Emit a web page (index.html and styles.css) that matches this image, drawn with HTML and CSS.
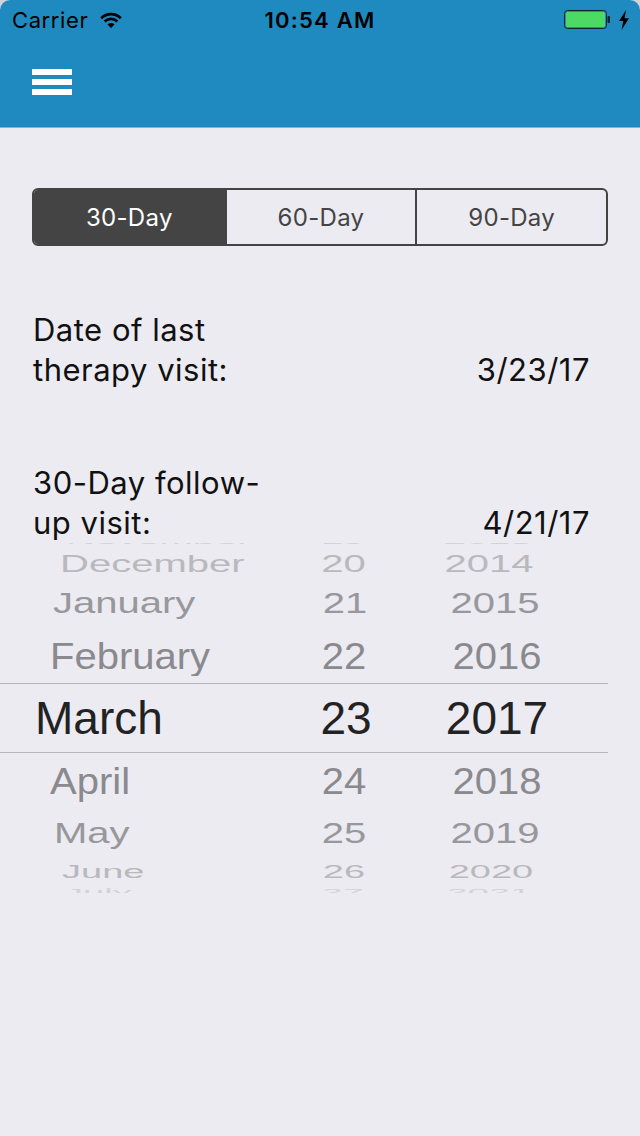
FILE: index.html
```html
<!DOCTYPE html>
<html lang="en">

    <head>
        <meta charset="UTF-8">
        <meta name="viewport" content="width=device-width, initial-scale=1.0">
        <title>Follow-up visits</title>
        <link rel="stylesheet" href="styles.css">
    </head>

    <body>
        <div class="app">
            <header>
                <div class="status-bar">
                    <div class="carrier">
                        Carrier
                        <svg class="wifi" width="24" height="17" viewBox="0 0 21 16">
                            <path d="M10.5 15 L7.2 11.7 A4.7 4.7 0 0 1 13.8 11.7 Z" fill="#000" />
                            <path d="M4.5 9 A8.5 8.5 0 0 1 16.5 9" fill="none" stroke="#000" stroke-width="2.6" />
                            <path d="M1.3 5.8 A13 13 0 0 1 19.7 5.8" fill="none" stroke="#000" stroke-width="2.6" />
                        </svg>
                    </div>
                    <div class="clock">10:54 AM</div>
                    <div class="battery">
                        <svg width="66" height="20" viewBox="0 0 66 20">
                            <rect x="0.5" y="0.5" width="42" height="18" rx="3" fill="none" stroke="#10242f" />
                            <rect x="2" y="2" width="39" height="15" rx="1.5" fill="#4cd964" />
                            <rect x="43.5" y="6" width="2.5" height="7" rx="1" fill="#10242f" />
                            <path d="M62 0 L55 11 L59.3 11 L57.5 20 L65 8.3 L60.6 8.3 Z" fill="#000" />
                        </svg>
                    </div>
                </div>
                <div class="nav-bar">
                    <button class="menu-btn" aria-label="Menu">
                        <span></span><span></span><span></span>
                    </button>
                </div>
            </header>

            <main>
                <div class="segmented">
                    <div class="segment active">30-Day</div>
                    <div class="segment">60-Day</div>
                    <div class="segment">90-Day</div>
                </div>

                <div class="date-row first">
                    <div class="label">Date of last<br>therapy visit:</div>
                    <div class="value">3/23/17</div>
                </div>

                <div class="date-row second">
                    <div class="label">30-Day follow-<br>up visit:</div>
                    <div class="value">4/21/17</div>
                </div>

                <!-- date wheel -->
                <div class="picker">
                    <div class="wheel-row r-nov"><span class="m">November</span><span class="d">19</span><span class="y">2013</span></div>
                    <div class="wheel-row r-dec"><span class="m">December</span><span class="d">20</span><span class="y">2014</span></div>
                    <div class="wheel-row r-jan"><span class="m">January</span><span class="d">21</span><span class="y">2015</span></div>
                    <div class="wheel-row r-feb"><span class="m">February</span><span class="d">22</span><span class="y">2016</span></div>
                    <div class="wheel-row r-mar"><span class="m">March</span><span class="d">23</span><span class="y">2017</span></div>
                    <div class="wheel-row r-apr"><span class="m">April</span><span class="d">24</span><span class="y">2018</span></div>
                    <div class="wheel-row r-may"><span class="m">May</span><span class="d">25</span><span class="y">2019</span></div>
                    <div class="wheel-row r-jun"><span class="m">June</span><span class="d">26</span><span class="y">2020</span></div>
                    <div class="wheel-row r-jul"><span class="m">July</span><span class="d">27</span><span class="y">2021</span></div>
                </div>
            </main>
        </div>
    </body>

</html>
```

FILE: styles.css
```css
:root {
    --bar-color: #1f8ac0;
    --bg-light: #ecebf1;
    --segment-color: #444444;
    --text-color: #111111;
    --wheel-line: #b7b7bb;
}

*,
*::before,
*::after {
    box-sizing: border-box;
}

body {
    margin: 0;
    background: #d2d2d6;
    font-family: Inter, "Liberation Sans", sans-serif;
    color: var(--text-color);
}

.app {
    min-height: 1136px;
    background: var(--bg-light);
    border-radius: 10px 10px 0 0;
    overflow: hidden;
}

header {
    background: var(--bar-color);
    border-bottom: 1px solid #a9a9ad;
}

.status-bar {
    height: 40px;
    display: grid;
    grid-template-columns: 1fr auto 1fr;
    align-items: center;
    font-size: 22px;
    color: #000;
}

.carrier {
    padding-left: 12px;
    display: flex;
    align-items: center;
    gap: 11px;
    letter-spacing: 0.6px;
}

.clock {
    font-weight: 600;
    letter-spacing: 1.2px;
}

.battery {
    display: flex;
    justify-content: flex-end;
    padding-right: 10px;
}

.battery svg {
    display: block;
    margin-top: -1px;
}

.nav-bar {
    height: 87px;
    padding: 29px 0 0 32px;
}

.menu-btn {
    display: flex;
    flex-direction: column;
    gap: 4px;
    width: 40px;
    padding: 0;
    border: none;
    background: none;
    cursor: pointer;
}

.menu-btn span {
    display: block;
    height: 6px;
    background: white;
}

main {
    padding-top: 60px;
}

.segmented {
    margin: 0 32px;
    height: 58px;
    display: grid;
    grid-template-columns: repeat(3, 1fr);
    border: 2px solid var(--segment-color);
    border-radius: 6px;
    overflow: hidden;
}

.segment {
    display: flex;
    align-items: center;
    justify-content: center;
    font-size: 24px;
    color: var(--segment-color);
    letter-spacing: 0.3px;
}

.segment + .segment {
    border-left: 2px solid var(--segment-color);
}

.segment.active {
    background: var(--segment-color);
    color: white;
}

.date-row {
    display: flex;
    justify-content: space-between;
    align-items: flex-end;
    padding: 0 50px 0 33px;
    font-size: 31px;
    line-height: 40px;
    letter-spacing: 0.5px;
}

.date-row.first {
    margin-top: 64px;
}

.date-row.second {
    margin-top: 73px;
}

/* wheel */
.picker {
    width: 608px;
    height: 350px;
    overflow: hidden;
    font-family: "Liberation Sans", Arial, sans-serif;
}

.wheel-row {
    display: grid;
    grid-template-columns: 290px 112px 190px;
    height: var(--h);
    line-height: var(--h);
    font-size: var(--fs);
    color: var(--c);
    white-space: nowrap;
}

.wheel-row span {
    display: block;
    transform: translateY(var(--dy, 0)) scaleY(var(--sy));
}

.wheel-row .m {
    padding-left: var(--indent);
}

.wheel-row .d {
    text-align: center;
    margin-left: var(--dx, 0);
}

.wheel-row .y {
    text-align: center;
    margin-left: var(--yx, 0);
}

.r-nov { --h: 9px; --fs: 40px; --sy: 0.3; --c: #d3d3d7; --indent: 66px; --dy: -8px; --dx: -6px; --yx: -18px; }
.r-dec { --h: 30px; --fs: 40px; --sy: 0.59; --c: #b9b9bd; --indent: 60px; --dy: -3px; --dx: -5px; --yx: -16px; }
.r-jan { --h: 47px; --fs: 40px; --sy: 0.74; --c: #98989c; --indent: 53px; --dy: -2px; --dx: -2px; --yx: -4px; }
.r-feb { --h: 54px; --fs: 40px; --sy: 0.9; --c: #8a8a8e; --indent: 50px; --dx: -4px; }
.r-apr { --h: 57px; --fs: 40px; --sy: 0.92; --c: #8a8a8e; --indent: 50px; --dx: -4px; }
.r-may { --h: 46px; --fs: 40px; --sy: 0.74; --c: #98989c; --indent: 54px; --dx: -4px; --yx: -4px; }
.r-jun { --h: 26px; --fs: 38px; --sy: 0.48; --c: #b9b9bd; --indent: 62px; --dy: 3px; --dx: -4px; --yx: -12px; }
.r-jul { --h: 11px; --fs: 38px; --sy: 0.25; --c: #d3d3d7; --indent: 64px; --dy: 4px; --dx: -6px; --yx: -16px; }

.r-mar {
    --h: 68px;
    --fs: 46px;
    --sy: 1;
    --c: #222222;
    --indent: 35px;
    height: 70px;
    border-top: 1px solid var(--wheel-line);
    border-bottom: 1px solid var(--wheel-line);
}
```
